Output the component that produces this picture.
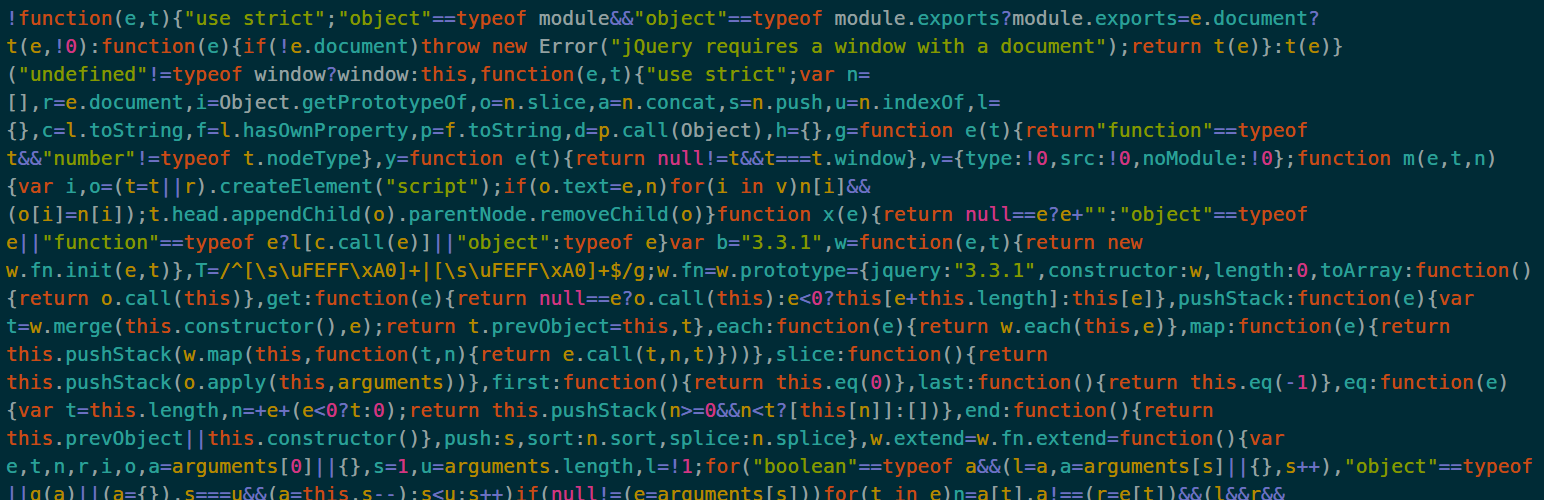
import React from "react";

const LINES: string[] = [
  '!function(e,t){"use strict";"object"==typeof module&&"object"==typeof module.exports?module.exports=e.document?',
  't(e,!0):function(e){if(!e.document)throw new Error("jQuery requires a window with a document");return t(e)}:t(e)}',
  '("undefined"!=typeof window?window:this,function(e,t){"use strict";var n=',
  '[],r=e.document,i=Object.getPrototypeOf,o=n.slice,a=n.concat,s=n.push,u=n.indexOf,l=',
  '{},c=l.toString,f=l.hasOwnProperty,p=f.toString,d=p.call(Object),h={},g=function e(t){return"function"==typeof',
  't&&"number"!=typeof t.nodeType},y=function e(t){return null!=t&&t===t.window},v={type:!0,src:!0,noModule:!0};function m(e,t,n)',
  '{var i,o=(t=t||r).createElement("script");if(o.text=e,n)for(i in v)n[i]&&',
  '(o[i]=n[i]);t.head.appendChild(o).parentNode.removeChild(o)}function x(e){return null==e?e+"":"object"==typeof',
  'e||"function"==typeof e?l[c.call(e)]||"object":typeof e}var b="3.3.1",w=function(e,t){return new',
  'w.fn.init(e,t)},T=/^[\\s\\uFEFF\\xA0]+|[\\s\\uFEFF\\xA0]+$/g;w.fn=w.prototype={jquery:"3.3.1",constructor:w,length:0,toArray:function()',
  '{return o.call(this)},get:function(e){return null==e?o.call(this):e<0?this[e+this.length]:this[e]},pushStack:function(e){var',
  't=w.merge(this.constructor(),e);return t.prevObject=this,t},each:function(e){return w.each(this,e)},map:function(e){return',
  'this.pushStack(w.map(this,function(t,n){return e.call(t,n,t)}))},slice:function(){return',
  'this.pushStack(o.apply(this,arguments))},first:function(){return this.eq(0)},last:function(){return this.eq(-1)},eq:function(e)',
  '{var t=this.length,n=+e+(e<0?t:0);return this.pushStack(n>=0&&n<t?[this[n]]:[])},end:function(){return',
  'this.prevObject||this.constructor()},push:s,sort:n.sort,splice:n.splice},w.extend=w.fn.extend=function(){var',
  'e,t,n,r,i,o,a=arguments[0]||{},s=1,u=arguments.length,l=!1;for("boolean"==typeof a&&(l=a,a=arguments[s]||{},s++),"object"==typeof',
  '||g(a)||(a={}),s===u&&(a=this,s--);s<u;s++)if(null!=(e=arguments[s]))for(t in e)n=a[t],a!==(r=e[t])&&(l&&r&&',
];

type Kind = "ws" | "str" | "re" | "num" | "id" | "op" | "p";
type Tok = { t: string; k: Kind; c?: string };

const KW = new Set(["function", "typeof", "return", "throw", "new", "this", "var", "if", "for", "in"]);
const MAG = new Set(["null", "true", "false"]);
const GLOBALS = new Set(["module", "window", "Error", "Object"]);
const OPS = ["===", "!==", "==", "!=", ">=", "<=", "&&", "||", "++", "--", "=", "!", "?", "+", "-", "<", ">"];

const C = {
  grey: "text-[#93a1a1]",
  orange: "text-[#cb4b16]",
  green: "text-[#859900]",
  violet: "text-[#6c71c4]",
  magenta: "text-[#d33682]",
  cyan: "text-[#2aa198]",
  yellow: "text-[#b58900]",
};

function tokenize(src: string): Tok[] {
  const out: Tok[] = [];
  let i = 0;
  const lastSig = () => {
    for (let j = out.length - 1; j >= 0; j--) if (out[j].k !== "ws") return out[j];
    return undefined;
  };
  while (i < src.length) {
    const ch = src[i];
    if (ch === " " || ch === "\n") {
      out.push({ t: ch, k: "ws" });
      i++;
      continue;
    }
    if (ch === '"') {
      let j = i + 1;
      while (j < src.length && src[j] !== '"') j++;
      out.push({ t: src.slice(i, j + 1), k: "str" });
      i = j + 1;
      continue;
    }
    if (ch === "/") {
      const ls = lastSig();
      if (ls && (ls.t === "=" || ls.t === "(" || ls.t === ",")) {
        let j = i + 1;
        while (j < src.length && src[j] !== "/") {
          if (src[j] === "\\") j++;
          j++;
        }
        j++;
        while (j < src.length && /[a-z]/.test(src[j])) j++;
        out.push({ t: src.slice(i, j), k: "re" });
        i = j;
        continue;
      }
    }
    if (/[0-9]/.test(ch)) {
      let j = i;
      while (j < src.length && /[0-9.]/.test(src[j])) j++;
      out.push({ t: src.slice(i, j), k: "num" });
      i = j;
      continue;
    }
    if (/[A-Za-z_$]/.test(ch)) {
      let j = i;
      while (j < src.length && /[\w$]/.test(src[j])) j++;
      out.push({ t: src.slice(i, j), k: "id" });
      i = j;
      continue;
    }
    const op = OPS.find((o) => src.startsWith(o, i));
    if (op) {
      out.push({ t: op, k: "op" });
      i += op.length;
      continue;
    }
    out.push({ t: ch, k: "p" });
    i++;
  }
  return out;
}

function classify(toks: Tok[]) {
  const sig: number[] = [];
  toks.forEach((t, idx) => {
    if (t.k !== "ws") sig.push(idx);
  });
  let depth = 0;
  let varDepth: number | null = null;
  let paramsMode = false;
  let sawFunction = false;
  for (let s = 0; s < sig.length; s++) {
    const tk = toks[sig[s]];
    const prev = s > 0 ? toks[sig[s - 1]] : undefined;
    const next = s < sig.length - 1 ? toks[sig[s + 1]] : undefined;
    if (tk.k === "str") tk.c = C.green;
    else if (tk.k === "re") tk.c = C.yellow;
    else if (tk.k === "num") tk.c = C.magenta;
    else if (tk.k === "op") tk.c = C.violet;
    else if (tk.k === "p") {
      tk.c = C.grey;
      if (tk.t === "(" || tk.t === "[" || tk.t === "{") {
        depth++;
        if (tk.t === "(" && sawFunction) {
          paramsMode = true;
          sawFunction = false;
        }
      } else if (tk.t === ")" || tk.t === "]" || tk.t === "}") {
        depth--;
        if (tk.t === ")") paramsMode = false;
      } else if (tk.t === ";" && varDepth !== null && depth === varDepth) {
        varDepth = null;
      }
    } else if (tk.k === "id") {
      const w = tk.t;
      if (prev && prev.t === ".") tk.c = C.cyan;
      else if (KW.has(w)) {
        tk.c = C.orange;
        if (w === "function") sawFunction = true;
        if (w === "var") varDepth = depth;
      } else if (MAG.has(w)) tk.c = C.magenta;
      else if (GLOBALS.has(w)) tk.c = C.grey;
      else if (prev && prev.t === "function") tk.c = C.cyan;
      else if (paramsMode) tk.c = C.cyan;
      else if (next && next.t === ":" && prev && (prev.t === "{" || prev.t === ",")) tk.c = C.cyan;
      else if (varDepth !== null && depth === varDepth && prev && (prev.t === "var" || prev.t === ",")) tk.c = C.cyan;
      else if (next && next.t === "=" && !(prev && prev.t === "(")) tk.c = C.cyan;
      else tk.c = C.yellow;
    }
  }
}

function buildLines(): Tok[][] {
  const toks = tokenize(LINES.join("\n"));
  classify(toks);
  const lines: Tok[][] = [[]];
  for (const t of toks) {
    if (t.t === "\n") lines.push([]);
    else lines[lines.length - 1].push(t);
  }
  return lines;
}

export default function App() {
  const lines = buildLines();
  return (
    <div className="w-[1544px] h-[500px] overflow-hidden bg-[#002b36] pt-[5px] pl-[6px]">
      <div className="font-['DejaVu_Sans_Mono',monospace] text-[19.67px] leading-[28px] text-[#93a1a1] [text-shadow:0_0_0.6px_currentColor]">
        {lines.map((ln, i) => (
          <div key={i} className="whitespace-pre h-[28px]">
            {ln.map((t, j) => (
              <span key={j} className={t.c}>
                {t.t}
              </span>
            ))}
          </div>
        ))}
      </div>
    </div>
  );
}
